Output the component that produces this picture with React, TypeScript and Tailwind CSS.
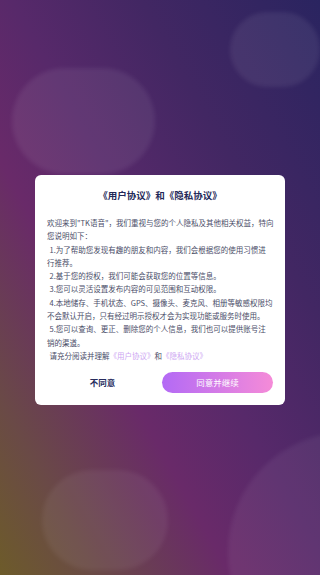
const font = { fontFamily: '"Noto Sans CJK SC", "Noto Sans", sans-serif' };

const lines: { text: string; indent?: boolean }[] = [
  { text: '欢迎来到"TK语音"，我们重视与您的个人隐私及其他相关权益，特向' },
  { text: "您说明如下：" },
  { text: "1.为了帮助您发现有趣的朋友和内容，我们会根据您的使用习惯进", indent: true },
  { text: "行推荐。" },
  { text: "2.基于您的授权，我们可能会获取您的位置等信息。", indent: true },
  { text: "3.您可以灵活设置发布内容的可见范围和互动权限。", indent: true },
  { text: "4.本地储存、手机状态、GPS、摄像头、麦克风、相册等敏感权限均", indent: true },
  { text: "不会默认开启，只有经过明示授权才会为实现功能或服务时使用。" },
  { text: "5.您可以查询、更正、删除您的个人信息，我们也可以提供账号注", indent: true },
  { text: "销的渠道。" },
];

export default function App() {
  return (
    <div
      style={font}
      className="relative h-[575px] w-[320px] overflow-hidden bg-[linear-gradient(to_top_right,#6d5b2a_0%,#6a4a46_15%,#692a69_36%,#57296a_52%,#422763_72%,#2a2460_100%)]"
    >
      {/* soft bubbles */}
      <div className="absolute left-[230px] top-[12px] h-[75px] w-[90px] rounded-full bg-white/[0.07] blur-[2px]" />
      <div className="absolute left-[12px] top-[68px] h-[106px] w-[143px] rounded-full bg-white/[0.07] blur-[2px]" />
      <div className="absolute left-[42px] top-[470px] h-[100px] w-[126px] rounded-full bg-white/[0.06] blur-[2px]" />
      <div className="absolute left-[228px] top-[432px] h-[240px] w-[240px] rounded-full bg-white/[0.06] blur-[2px]" />

      <div className="relative flex justify-center pt-[175px]">
        <div className="w-[250px] rounded-md bg-white px-[12px] pb-[12px] pt-[14px]">
          <h1 className="text-center text-[9.5px] font-bold leading-[12px] text-[#232858]">
            《用户协议》和《隐私协议》
          </h1>

          <div className="mt-[15px] text-[7.5px] leading-[13.3px] text-[#4a4d68]">
            {lines.map((l) => (
              <div
                key={l.text}
                className={`whitespace-nowrap ${l.indent ? "pl-[2.5px]" : ""}`}
              >
                {l.text}
              </div>
            ))}
            <div className="whitespace-nowrap pl-[2.5px]">
              请充分阅读并理解
              <span className="text-[#cda6f2]">《用户协议》</span>和
              <span className="text-[#cda6f2]">《隐私协议》</span>
            </div>
          </div>

          <div className="mt-[10px] grid grid-cols-2 gap-[4px]">
            <button className="flex h-[21px] items-center justify-center text-[8.5px] font-bold text-[#262b5c]">
              不同意
            </button>
            <button className="flex h-[21px] items-center justify-center rounded-full bg-[linear-gradient(to_right,#b36af5,#f58bd8)] text-[8.5px] text-white">
              同意并继续
            </button>
          </div>
        </div>
      </div>
    </div>
  );
}
